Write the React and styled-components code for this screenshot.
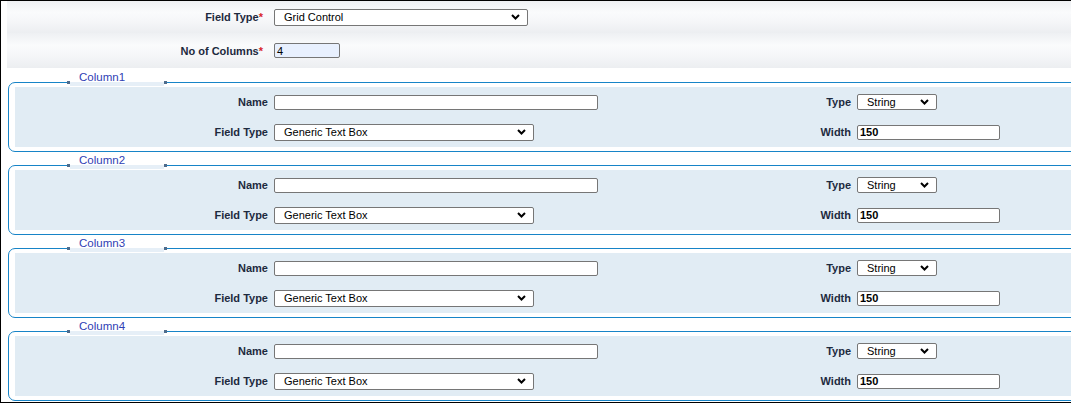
import React from 'react';
import styled, { createGlobalStyle } from 'styled-components';

const GlobalStyle = createGlobalStyle`
    html, body {
        margin: 0;
        padding: 0;
        background: #FFFFFF;
    }
    body {
        font-family: "Liberation Sans", Arial, sans-serif;
    }
    * {
        box-sizing: border-box;
    }
`;

const Frame = styled.div`
    width: 1071px;
    height: 403px;
    border-top: 1px solid #000000;
    border-left: 1px solid #000000;
    border-bottom: 1px solid #000000;
    padding-left: 6px;
    overflow: hidden;
    background: #FFFFFF;
`;
const TopForm = styled.div`
    display: flex;
    flex-direction: column;
    margin-bottom: 14px;
`;
const TopRow = styled.div`
    display: grid;
    grid-template-columns: 256px 1fr;
    column-gap: 11px;
    align-items: center;
    height: ${props => props.$height}px;
    background: linear-gradient(180deg, #EEF0F3 0%, #FAFBFC 35%, #F6F7F9 60%, #ECEEF1 100%);
`;
const Label = styled.label`
    font-size: 11px;
    font-weight: bold;
    color: #1D2A3E;
    text-align: right;
    white-space: nowrap;
`;
const Required = styled.span`
    color: #D8262C;
`;
const SelectBox = styled.div`
    display: flex;
    align-items: center;
    justify-content: space-between;
    width: ${props => props.$width}px;
    height: ${props => props.$height || 17}px;
    padding: 0 7px 0 9px;
    border: 1px solid #767676;
    border-radius: 2px;
    background: #FFFFFF;
    font-size: 11px;
    color: #000000;
`;
const TextBox = styled.div`
    display: flex;
    align-items: center;
    width: ${props => props.$width}px;
    height: 15px;
    padding: 0 2px;
    border: 1px solid #767676;
    border-radius: 2px;
    background: ${props => props.$filled ? '#E8F0FE' : '#FFFFFF'};
    font-size: 11px;
    font-weight: ${props => props.$bold ? 'bold' : 'normal'};
    color: #000000;
`;
const Group = styled.div`
    position: relative;
    margin: 0 -20px 13px 1px;
    padding: 4px 0 4px 6px;
    border: 1px solid #1784C7;
    border-radius: 7px;
`;
const Legend = styled.div`
    position: absolute;
    left: 58px;
    top: -11px;
    display: flex;
    align-items: flex-end;
`;
const LegendDot = styled.span`
    width: 3px;
    height: 3px;
    margin-bottom: 2px;
    background: #4E6C8C;
`;
const LegendText = styled.span`
    width: 94px;
    height: 14px;
    padding-left: 9px;
    font-size: 11.5px;
    line-height: 11px;
    color: #2F40B4;
    background: linear-gradient(180deg, #FFFFFF 0, #FFFFFF 10px, #E6EFF7 10px, #E6EFF7 100%);
`;
const Panel = styled.div`
    display: grid;
    grid-template-columns: 253px 511px 60px 1fr;
    grid-auto-rows: 30px;
    column-gap: 6px;
    align-items: center;
    background: #E1ECF4;
`;

const Chevron = () => (
    <svg width="9" height="6" viewBox="0 0 9 6">
        <path d="M1 1 L4.5 4.5 L8 1" fill="none" stroke="#000000" strokeWidth="2" />
    </svg>
);

const Select = ({ value, width, height }) => (
    <SelectBox $width={width} $height={height}>
        <span>{value}</span>
        <Chevron />
    </SelectBox>
);

const ColumnGroup = ({ title }) => (
    <Group>
        <Legend>
            <LegendDot />
            <LegendText>{title}</LegendText>
            <LegendDot />
        </Legend>
        <Panel>
            <Label>Name</Label>
            <TextBox $width={324} />
            <Label>Type</Label>
            <Select value="String" width={80} height={16} />
            <Label>Field Type</Label>
            <Select value="Generic Text Box" width={260} />
            <Label>Width</Label>
            <TextBox $width={143} $bold>150</TextBox>
        </Panel>
    </Group>
);

const App = () => {
    const columns = ['Column1', 'Column2', 'Column3', 'Column4'];
    return (
        <>
            <GlobalStyle />
            <Frame>
                <TopForm>
                    <TopRow $height={32}>
                        <Label>Field Type<Required>*</Required></Label>
                        <Select value="Grid Control" width={254} />
                    </TopRow>
                    <TopRow $height={35}>
                        <Label>No of Columns<Required>*</Required></Label>
                        <TextBox $width={66} $filled>4</TextBox>
                    </TopRow>
                </TopForm>
                {columns.map(title => (
                    <ColumnGroup key={title} title={title} />
                ))}
            </Frame>
        </>
    );
};

export default App;
